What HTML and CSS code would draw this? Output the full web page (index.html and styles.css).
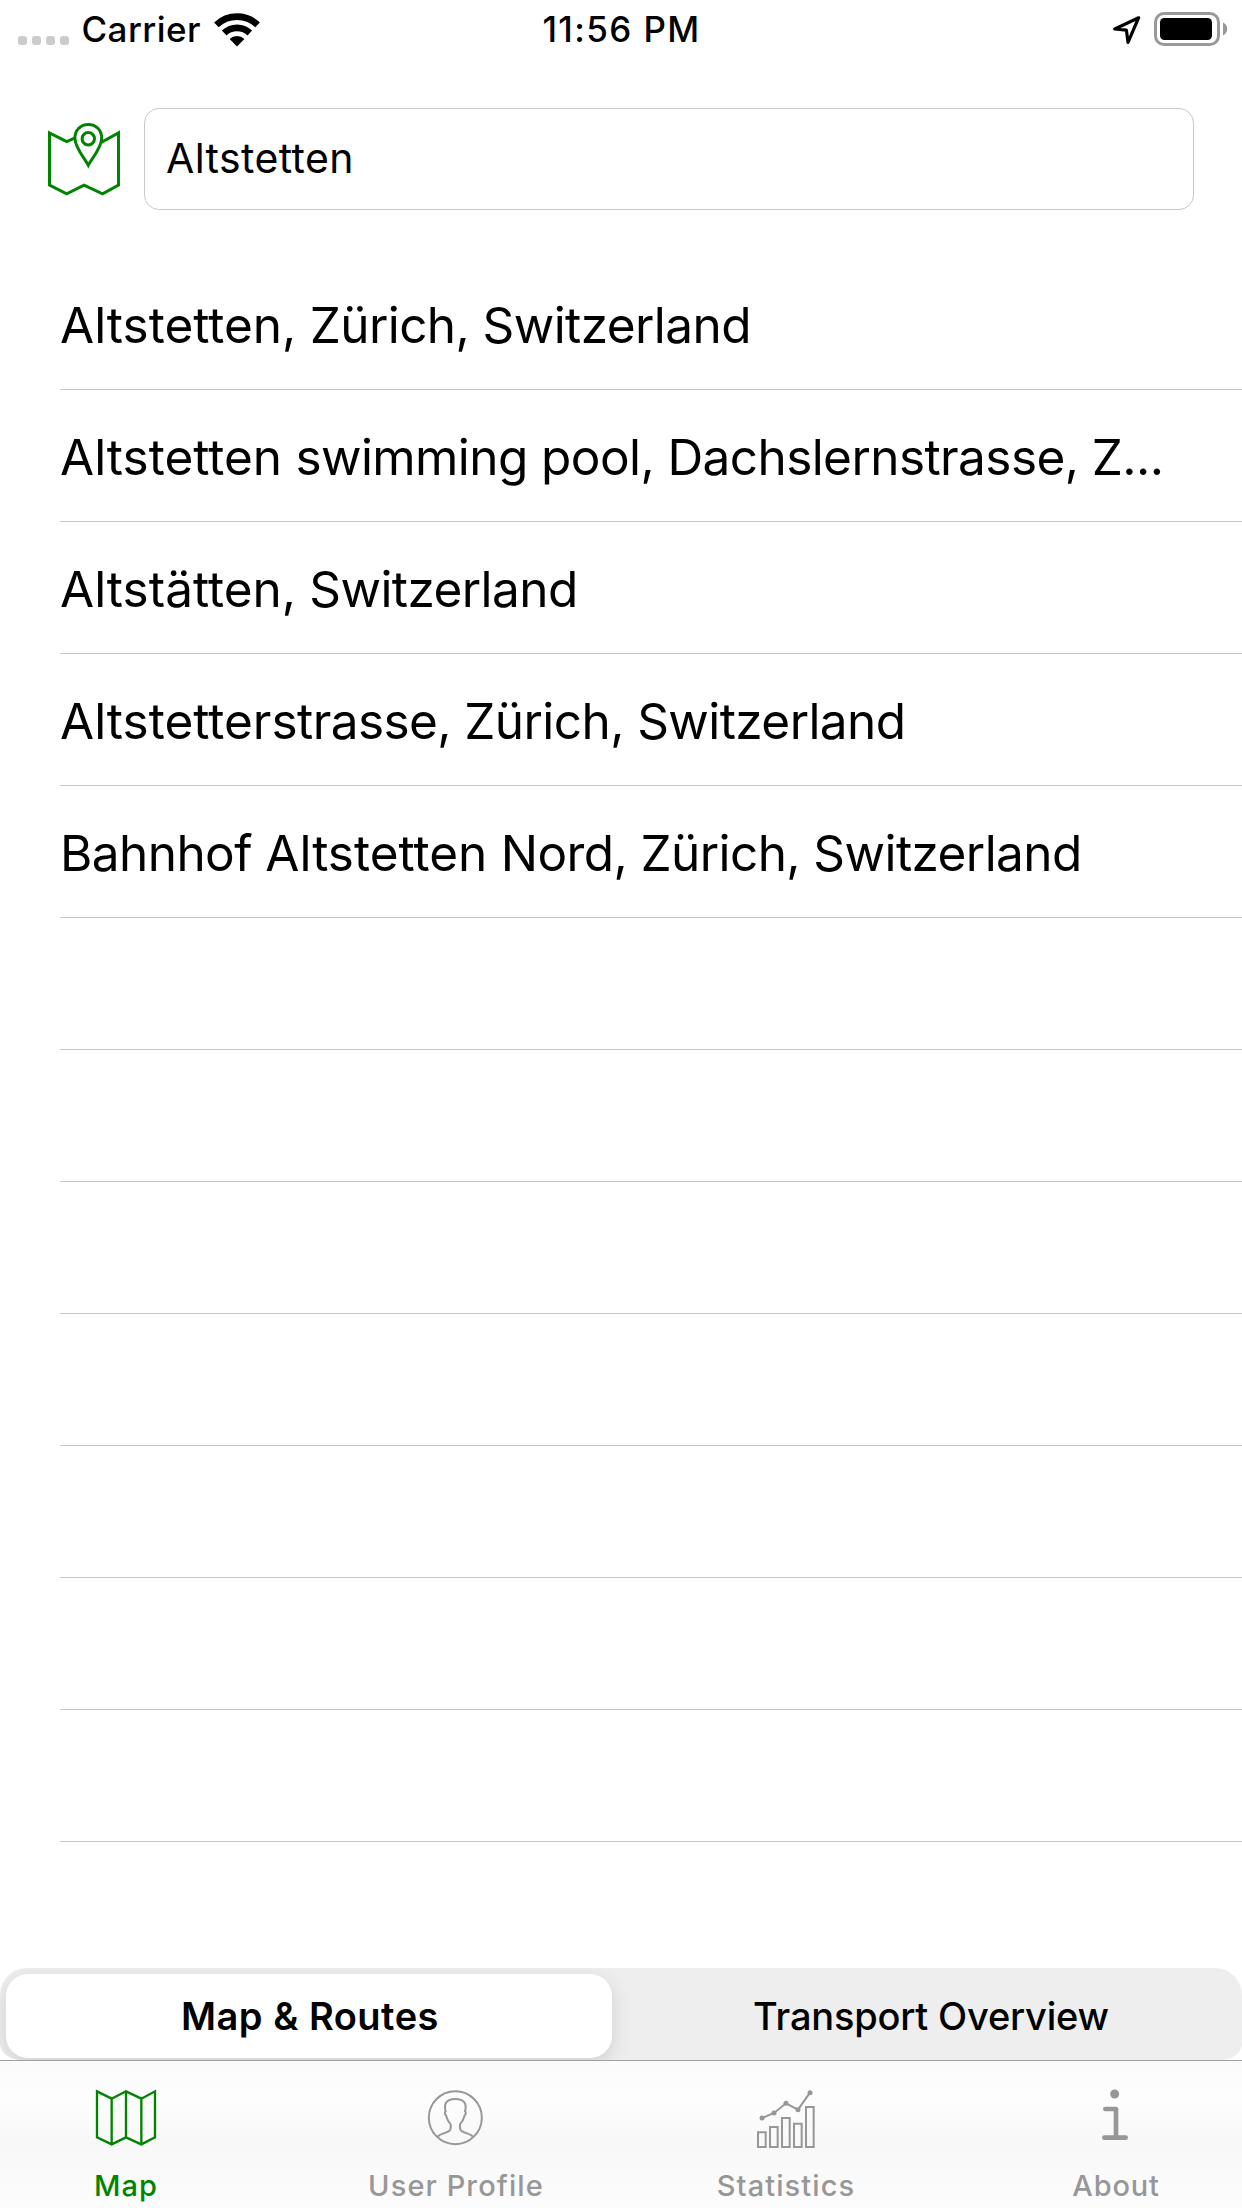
FILE: index.html
```
<!DOCTYPE html>
<html lang="en">
<head>
<meta charset="utf-8">
<title>Map</title>
<link rel="stylesheet" href="styles.css">
</head>
<body>
<div class="screen">
  <header class="status">
    <div class="status-left">
      <span class="signal"><i></i><i></i><i></i><i></i></span>
      <span class="carrier">Carrier</span>
      <svg class="wifi" width="48" height="34" viewBox="0 0 48 34" fill="none" stroke="#000">
        <path d="M3.4 11.8A30 30 0 0 1 44.6 11.8" stroke-width="6.6"/>
        <path d="M11.2 20A18.6 18.6 0 0 1 36.8 20" stroke-width="6.6"/>
        <path d="M24 33.4L16.6 26.1A10.4 10.4 0 0 1 31.4 26.1Z" fill="#000" stroke="none"/>
      </svg>
    </div>
    <span class="time">11:56 PM</span>
    <div class="status-right">
      <svg width="30" height="30" viewBox="0 0 30 30" fill="none" stroke="#000" stroke-width="3.2" stroke-linejoin="round">
        <path d="M26.6 3.8L2.8 15L14.4 16.1L16 28.4Z"/>
      </svg>
      <svg width="76" height="34" viewBox="0 0 76 34">
        <rect x="1.5" y="1.5" width="63" height="31" rx="8.5" fill="none" stroke="#999" stroke-width="3"/>
        <rect x="6" y="6" width="52" height="22" rx="4.5"/>
        <path d="M69 10.6Q73.2 12.6 73.2 17T69 23.4Z" fill="#999"/>
      </svg>
    </div>
  </header>

  <div class="search">
    <svg width="72" height="74" viewBox="0 0 72 74" fill="none" stroke="currentColor" stroke-width="3">
      <path d="M26.5 16.2L18.7 19.7L1.5 10.9V63L18.7 71.8L36 63.2L54.6 71.8L70.5 63V10.9L53.5 20.2"/>
      <path d="M40.3 43.2C37.6 37.4 26.9 26 26.9 16.2C26.9 8.2 32.6 2.4 40.3 2.4S53.7 8.2 53.7 16.2C53.7 26 43 37.4 40.3 43.2Z"/>
      <circle cx="40.3" cy="16.7" r="6.2"/>
    </svg>
    <div class="field">Altstetten</div>
  </div>

  <ul class="results">
    <li><b>Altstetten,</b> Zürich, Switzerland</li>
    <li><b>Altstetten</b> swimming pool, Dachslernstrasse, Z...</li>
    <li><b>Altstätten,</b> Switzerland</li>
    <li><b>Altstetter</b>strasse, Zürich, Switzerland</li>
    <li>Bahnhof <b>Altstetten</b> Nord, Zürich, Switzerland</li>
    <li></li><li></li><li></li><li></li><li></li><li></li><li></li>
  </ul>

  <div class="segments">
    <div class="segment selected">Map &amp; Routes</div>
    <div class="segment other">Transport Overview</div>
  </div>

  <nav class="tabs">
    <div class="tab active">
      <svg width="72" height="72" viewBox="-18 36 216 216" fill="none" stroke="currentColor" stroke-width="7">
        <path d="M3 46L47 68L90 46L136 68L177 46V184L136 205L90 184L47 205L3 184ZM47 68V205M90 46V184M136 68V205"/>
      </svg>
      <span>Map</span>
    </div>
    <div class="tab profile">
      <svg width="72" height="72" viewBox="29 54 216 216" fill="none" stroke="currentColor" stroke-width="6">
        <circle cx="135" cy="143" r="79.5"/>
        <path d="M82 200C90 191 104 190 115 184C124 179 121 171 121 163C111 153 110 146 107 136C102 132 103 126 106 124C100 102 107 87 135 87C163 87 170 102 164 124C167 126 168 132 163 136C160 146 159 153 149 163C149 171 146 179 155 184C166 190 180 191 188 200"/>
      </svg>
      <span>User Profile</span>
    </div>
    <div class="tab statistics">
      <svg width="72" height="72" viewBox="30 54 216 216" fill="none" stroke="currentColor" stroke-width="6">
        <path d="M54 187H77V231H54ZM90 171H113V231H90ZM126 144H149V231H126ZM162 161H185V231H162ZM198 111H221V231H198Z"/>
        <path d="M66 144L102 129L138 100L174 119L210 68"/>
        <g fill="currentColor" stroke="none">
          <circle cx="66" cy="144" r="7.5"/><circle cx="102" cy="129" r="7.5"/><circle cx="138" cy="100" r="7.5"/><circle cx="174" cy="119" r="7.5"/><circle cx="210" cy="68" r="7.5"/>
        </g>
      </svg>
      <span>Statistics</span>
    </div>
    <div class="tab about">
      <svg width="72" height="72" viewBox="60 84 216 216" fill="none" stroke="currentColor" stroke-width="14" stroke-linecap="round" stroke-linejoin="round">
        <circle cx="164" cy="102" r="13.5" fill="currentColor" stroke="none"/>
        <path d="M136 147H168V233M133 233H197"/>
      </svg>
      <span>About</span>
    </div>
  </nav>
</div>
</body>
</html>
```
FILE: styles.css
```
* { box-sizing: border-box; }
body { margin: 0; background: #fff; color: #000; font-family: Inter, "Liberation Sans", sans-serif; }
.screen { width: 1242px; height: 2208px; display: flex; flex-direction: column; overflow: hidden; }
svg { display: block; flex: none; }

.status { height: 58px; display: grid; grid-template-columns: 1fr auto 1fr; align-items: center; padding: 0 12px 0 18px; font-size: 35px; font-weight: 500; line-height: 58px; }
.status-left { display: flex; align-items: center; }
.signal { display: flex; gap: 5px; padding-top: 23px; }
.signal i { width: 9px; height: 9px; border-radius: 3px; background: #ccc; }
.carrier { margin-left: 12.5px; letter-spacing: 0.43px; }
.wifi { margin-left: 12px; margin-top: 1px; }
.time { letter-spacing: 1.39px; margin: 0 5px 0 0; }
.status-right { display: flex; justify-content: flex-end; align-items: center; gap: 12px; }

.search { height: 200px; padding: 50px 48px 0; display: flex; align-items: flex-start; gap: 24px; }
.search svg { margin-top: 14px; color: #008400; }
.field { flex: 1; height: 102px; border: 1px solid #c8c8c8; border-radius: 15px; padding: 0 21px; font-size: 41px; line-height: 98px; letter-spacing: 0.4px; }

.results { list-style: none; margin: 0; padding: 0 0 0 60px; height: 1710px; font-size: 49.5px; letter-spacing: -0.58px; }
.results li { height: 132px; border-bottom: 1px solid #c6c6c8; padding-top: 3px; line-height: 128px; white-space: nowrap; }
.results b { font-weight: 400; letter-spacing: 0; }

.segments { height: 92px; display: grid; grid-template-columns: 606px 1fr; gap: 10px; padding: 6px 6px 2px; background: #eee; border-radius: 27px 27px 22px 22px / 27px 27px 16px 16px; overflow: hidden; font-size: 38px; font-weight: 500; text-align: center; line-height: 84px; letter-spacing: -0.2px; }
.segment.selected { height: 84px; padding-left: 2px; background: #fff; border-radius: 22px; font-weight: 600; letter-spacing: 0.5px; box-shadow: 0 6px 20px rgba(0, 0, 0, 0.13); }
.segment.other { padding-left: 4px; }

.tabs { height: 148px; border-top: 1px solid #a0a0a0; display: flex; justify-content: space-between; padding: 0 3px; background: linear-gradient(#fbfbfb, #fdfdfd 28%, #f8f8f8 55%, #fcfcfc); color: #979797; }
.tab { width: 246px; padding-top: 27px; display: flex; flex-direction: column; align-items: center; font-size: 29px; font-weight: 500; line-height: 36px; letter-spacing: 1.1px; }
.tab span { margin-top: 8px; }
.tab.active { color: #008400; }
.about span { letter-spacing: 0.8px; }
```
